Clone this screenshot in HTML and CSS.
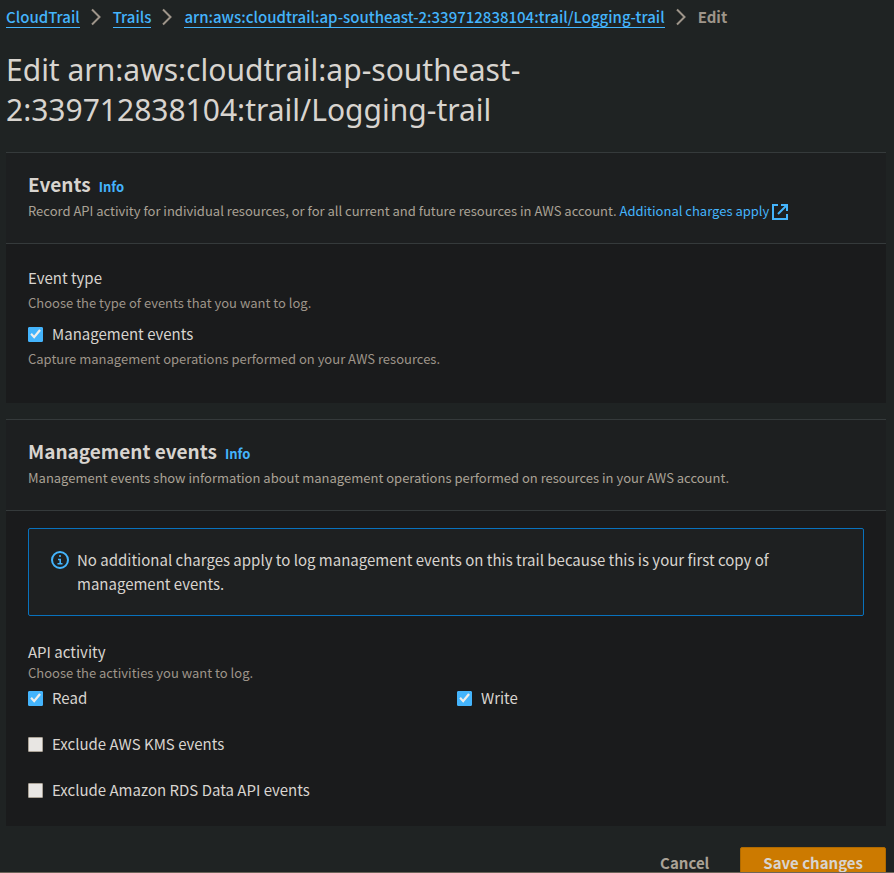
FILE: index.html
```html
<!DOCTYPE html>
<html lang="en">
<head>
<meta charset="utf-8">
<title>Edit trail - CloudTrail</title>
<link rel="stylesheet" href="styles.css">
</head>
<body>
<div class="page">
  <nav class="breadcrumbs" aria-label="Breadcrumbs">
    <a href="#">CloudTrail</a>
    <svg class="chevron" viewBox="0 0 10 18" aria-hidden="true"><path d="M1 1.5 8.5 9 1 16.5"/></svg>
    <a href="#">Trails</a>
    <svg class="chevron" viewBox="0 0 10 18" aria-hidden="true"><path d="M1 1.5 8.5 9 1 16.5"/></svg>
    <a href="#">arn:aws:cloudtrail:ap-southeast-2:339712838104:trail/Logging-trail</a>
    <svg class="chevron" viewBox="0 0 10 18" aria-hidden="true"><path d="M1 1.5 8.5 9 1 16.5"/></svg>
    <span class="current">Edit</span>
  </nav>
  <h1>Edit arn:aws:cloudtrail:ap-southeast-<br>2:339712838104:trail/Logging-trail</h1>

  <form>
    <section class="panel">
      <header class="panel-header">
        <div class="panel-title"><h2>Events</h2><a class="info" href="#">Info</a></div>
        <p>Record API activity for individual resources, or for all current and future resources in AWS account. <a class="external" href="#">Additional charges apply <svg viewBox="0 0 16 16" aria-hidden="true"><path d="M6 1H1v14h14v-5M9 1h6v6M15 1 6 10"/></svg></a></p>
      </header>
      <div class="event-type">
        <h3>Event type</h3>
        <p class="hint">Choose the type of events that you want to log.</p>
        <label class="check"><input type="checkbox" checked>Management events</label>
        <p class="hint">Capture management operations performed on your AWS resources.</p>
      </div>
    </section>

    <section class="panel">
      <header class="panel-header">
        <div class="panel-title"><h2>Management events</h2><a class="info" href="#">Info</a></div>
        <p>Management events show information about management operations performed on resources in your AWS account.</p>
      </header>
      <div class="activity">
        <div class="alert" role="status">
          <svg viewBox="0 0 18 18" aria-hidden="true"><circle cx="9" cy="9" r="8"/><path d="M8 5h2M7 8.5h2.2V12M6.5 12.8h5"/></svg>
          <p>No additional charges apply to log management events on this trail because this is your first copy of management events.</p>
        </div>
        <h3>API activity</h3>
        <p class="hint">Choose the activities you want to log.</p>
        <div class="choices">
          <label class="check"><input type="checkbox" checked>Read</label>
          <label class="check"><input type="checkbox" checked>Write</label>
        </div>
        <label class="check">
          <input type="checkbox">Exclude AWS KMS events</label>
        <label class="check">
          <input type="checkbox">Exclude Amazon RDS Data API events</label>
      </div>
    </section>

    <div class="actions">
      <button class="cancel" type="button">Cancel</button>
      <button class="save" type="submit">Save changes</button>
    </div>
  </form>
</div>
</body>
</html>
```
FILE: styles.css
```css
* {
  box-sizing: border-box;
}

body {
  margin: 0;
  background: #1f2323;
  color: #d8d4cf;
  font-family: "Noto Sans CJK JP", "Noto Sans", sans-serif;
  font-size: 15px;
  line-height: 24px;
}

h1, h2, h3, p {
  margin: 0;
}

a {
  color: #44b4fc;
  text-decoration: none;
}

.page {
  height: 100vh;
  overflow: hidden;
  padding: 4px 8px 0 6px;
  border-bottom: 1px solid #6c6459;
}

.breadcrumbs {
  display: flex;
  align-items: center;
  height: 26px;
  font-weight: 500;
}

.breadcrumbs a {
  line-height: 20px;
  border-bottom: 1px solid #44b4fc;
}

.breadcrumbs .current {
  color: #9e958a;
  font-weight: 700;
}

.chevron {
  width: 10px;
  height: 18px;
  margin: 0 12px 0 11px;
  fill: none;
  stroke: #9e958a;
  stroke-width: 2;
}

h1 {
  padding: 20px 0 22px;
  font-family: "Noto Sans", sans-serif;
  font-size: 30px;
  line-height: 40px;
  font-weight: 400;
}

.panel {
  margin-bottom: 16px;
  border-top: 1px solid #353a3b;
  background: #1a1b1c;
}

.panel-header {
  padding: 19px 22px;
  border-bottom: 1px solid #353a3b;
  background: #1d1f20;
  color: #aaa296;
  font-size: 13px;
}

.panel-header p {
  line-height: 26px;
}

.panel-title {
  display: flex;
  align-items: baseline;
  gap: 8px;
  margin-bottom: 2px;
}

h2 {
  color: #d8d4cf;
  font-size: 19px;
  line-height: 24px;
  font-weight: 700;
}

.info {
  font-size: 13px;
  line-height: 16px;
  font-weight: 700;
}

.external svg {
  width: 16px;
  height: 16px;
  vertical-align: -4px;
  fill: none;
  stroke: currentColor;
  stroke-width: 2;
}

h3 {
  font-size: 15px;
  font-weight: 400;
}

.hint {
  color: #9e958a;
  font-size: 13px;
}

.check {
  display: flex;
  align-items: center;
  gap: 9px;
}

.check input {
  appearance: none;
  width: 15px;
  height: 15px;
  margin: 0;
  border: 1px solid #aaa296;
  border-radius: 1px;
  background: #e8e6e3;
}

.check input:checked {
  border-color: #44b4fc;
  background: #44b4fc;
}

.check input:checked::after {
  content: "";
  display: block;
  width: 13px;
  height: 13px;
  background: #f0eeeb;
  clip-path: polygon(10% 53%, 22% 42%, 39% 61%, 78% 13%, 92% 25%, 40% 87%);
}

.event-type {
  padding: 22px 22px 31px;
}

.event-type .hint {
  line-height: 26px;
}

.event-type .check {
  margin-top: 6px;
}

.alert {
  display: flex;
  gap: 8px;
  margin-bottom: 24px;
  padding: 19px 22px;
  border: 1px solid #0972bd;
  border-radius: 2px;
  background: #1e2021;
}

.alert svg {
  flex: none;
  width: 18px;
  height: 18px;
  margin-top: 3px;
  fill: none;
  stroke: #44b4fc;
  stroke-width: 2;
}

.alert svg path {
  stroke-width: 1.6;
}

.activity {
  padding: 17px 22px 24px;
}

.activity .hint {
  line-height: 18px;
}

.activity > .check {
  margin-top: 22px;
}

.choices {
  display: grid;
  grid-template-columns: 1fr 1fr;
  column-gap: 22px;
  margin-top: 4px;
}

.actions {
  display: flex;
  justify-content: flex-end;
  margin-top: 21px;
  gap: 8px;
}

button {
  padding: 3px 22px;
  border: 1px solid transparent;
  border-radius: 2px;
  background: none;
  color: #aaa296;
  font: inherit;
  font-weight: 700;
}

.save {
  border-color: #b06a00;
  background: #cc7a00;
  color: #d8d4cf;
}
```
